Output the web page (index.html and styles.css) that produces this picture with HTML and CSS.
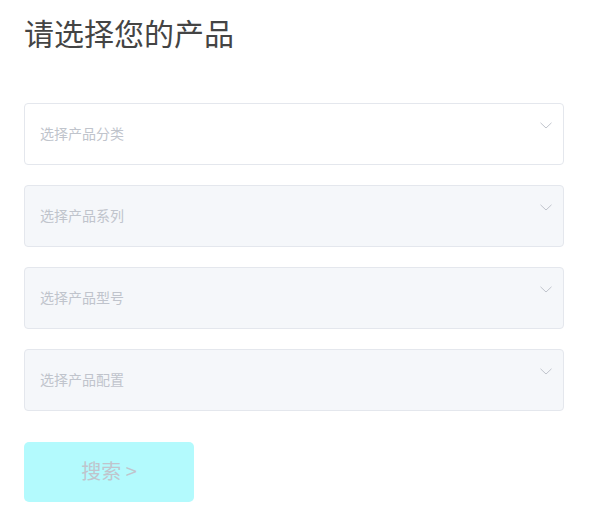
FILE: index.html
```html
<!DOCTYPE html>
<html lang="zh">
<head>
<meta charset="utf-8">
<link rel="stylesheet" href="styles.css">
</head>
<body>
<div class="page">
  <h1 class="title">请选择您的产品</h1>
  <div class="form">
    <div class="select">
      <span class="placeholder">选择产品分类</span>
      <svg class="arrow" width="12" height="7" viewBox="0 0 12 7"><path d="M0.5 0.8 L6 6 L11.5 0.8" fill="none" stroke="#c0c4cc" stroke-width="1"/></svg>
    </div>
    <div class="select disabled">
      <span class="placeholder">选择产品系列</span>
      <svg class="arrow" width="12" height="7" viewBox="0 0 12 7"><path d="M0.5 0.8 L6 6 L11.5 0.8" fill="none" stroke="#c0c4cc" stroke-width="1"/></svg>
    </div>
    <div class="select disabled">
      <span class="placeholder">选择产品型号</span>
      <svg class="arrow" width="12" height="7" viewBox="0 0 12 7"><path d="M0.5 0.8 L6 6 L11.5 0.8" fill="none" stroke="#c0c4cc" stroke-width="1"/></svg>
    </div>
    <div class="select disabled">
      <span class="placeholder">选择产品配置</span>
      <svg class="arrow" width="12" height="7" viewBox="0 0 12 7"><path d="M0.5 0.8 L6 6 L11.5 0.8" fill="none" stroke="#c0c4cc" stroke-width="1"/></svg>
    </div>
    <button class="search">搜索 &gt;</button>
  </div>
</div>
</body>
</html>
```

FILE: styles.css
```css
html, body {
  margin: 0;
  padding: 0;
  background: #ffffff;
}
body {
  font-family: "Noto Sans CJK SC", "Noto Sans", sans-serif;
}
.page {
  padding: 12px 36px 0 24px;
}
.title {
  margin: 0;
  font-size: 30px;
  line-height: 40px;
  font-weight: 400;
  color: #444444;
}
.form {
  margin-top: 51px;
  display: flex;
  flex-direction: column;
  align-items: flex-start;
  gap: 20px;
}
.select {
  position: relative;
  box-sizing: border-box;
  width: 100%;
  height: 62px;
  border: 1px solid #e4e7ed;
  border-radius: 4px;
  background: #ffffff;
  display: flex;
  align-items: center;
  padding: 0 15px 3px;
}
.select.disabled {
  background: #f5f7fa;
}
.placeholder {
  font-size: 14px;
  line-height: 20px;
  color: #c0c4cc;
}
.arrow {
  position: absolute;
  right: 11px;
  top: 18px;
}
.search {
  margin-top: 11px;
  width: 170px;
  height: 60px;
  border: none;
  border-radius: 5px;
  background: #b3fafd;
  color: #c0c4cc;
  font-family: "Noto Sans CJK SC", "Noto Sans", sans-serif;
  font-size: 20px;
  line-height: 24px;
  padding: 0 0 2px;
}
```
